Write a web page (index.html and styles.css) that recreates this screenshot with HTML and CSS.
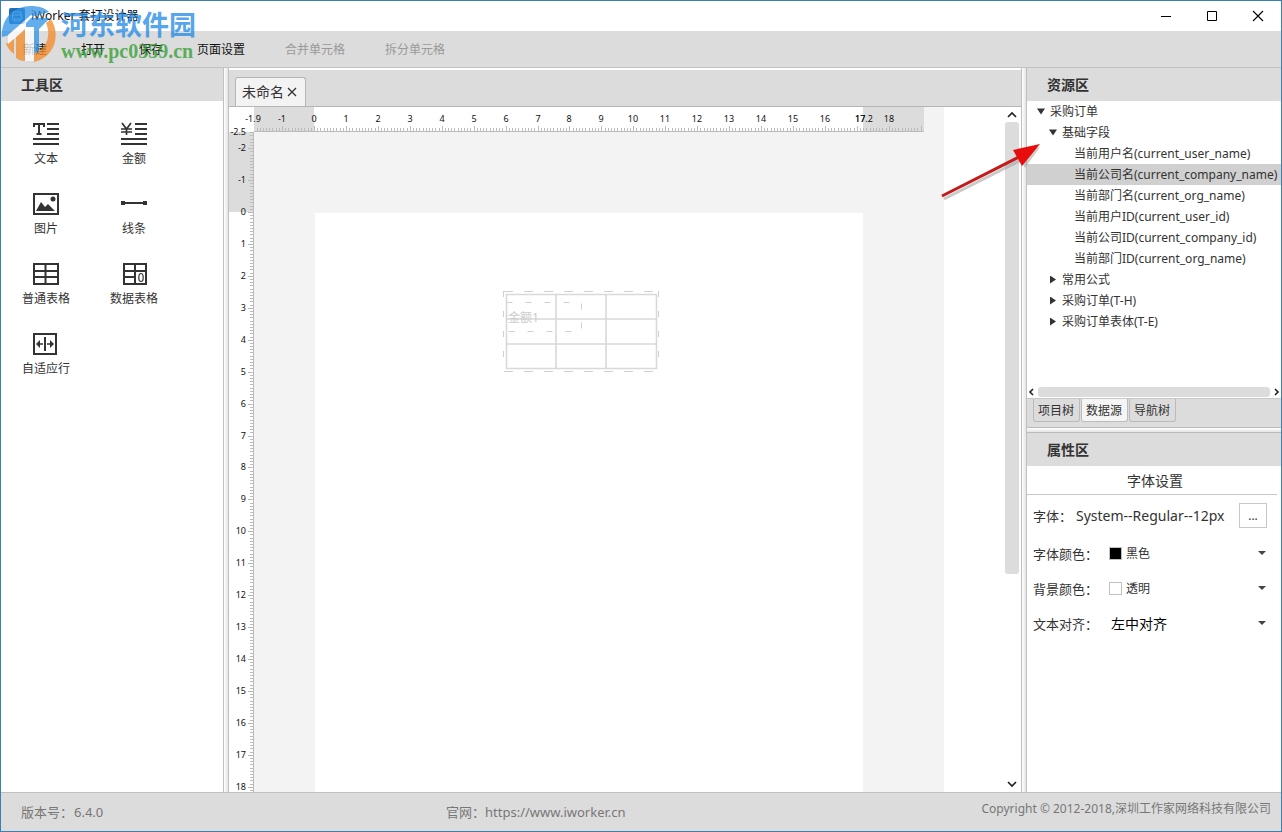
FILE: index.html
```html
<!DOCTYPE html>
<html lang="zh-CN">
<head>
<meta charset="utf-8">
<title>iWorker 套打设计器</title>
<link rel="stylesheet" href="styles.css">
</head>
<body>
<header class="titlebar">
  <svg class="app-icon" width="16" height="16" viewBox="0 0 16 16"><rect width="16" height="16" rx="2" fill="#1f6fb5"/><path d="M4 7V4h8v3M3.500 7h9v4h-9zM5 11v2h6v-2" fill="none" stroke="#b9dcf5"/></svg>
  <h1 class="app-title">iWorker 套打设计器</h1>
  <div class="window-buttons">
    <button class="window-button" aria-label="最小化"><svg width="12" height="12"><path d="M1 6.500h10" stroke="#000"/></svg></button>
    <button class="window-button" aria-label="最大化"><svg width="12" height="12"><path d="M1.500 1.500h9v9h-9z" fill="none" stroke="#000"/></svg></button>
    <button class="window-button" aria-label="关闭"><svg width="12" height="12"><path d="M1 1l10 10M11 1L1 11" stroke="#000" stroke-width="1.100"/></svg></button>
  </div>
</header>
<nav class="menu">
  <button class="menu-item">新建</button>
  <button class="menu-item">打开</button>
  <button class="menu-item">保存</button>
  <button class="menu-item">页面设置</button>
  <button class="menu-item menu-cell" disabled>合并单元格</button>
  <button class="menu-item menu-cell" disabled>拆分单元格</button>
</nav>

<main class="workspace">
  <section class="panel tools">
    <h2 class="panel-title">工具区</h2>
    <div class="tool-grid">
      <button class="tool"><svg width="26" height="24" viewBox="0 0 26 24"><path d="M14 2h12M14 7h12M14 12h12M0 17h26M0 22h26" stroke="#333" stroke-width="2"/><path d="M1 5V2h10v3M6 2v10M3.500 12h5" fill="none" stroke="#333" stroke-width="2"/></svg>文本</button>
      <button class="tool"><svg width="26" height="24" viewBox="0 0 26 24"><path d="M14 2h12M14 7h12M14 12h12M0 17h26M0 22h26" stroke="#333" stroke-width="2"/><path d="M1 1l4.500 6L10 1M5.500 7v6M0 7h11M0 10h11" fill="none" stroke="#333" stroke-width="1.700"/></svg>金额</button>
      <button class="tool"><svg width="26" height="24" viewBox="0 0 26 24"><path d="M1 2h24v20H1z" fill="none" stroke="#333" stroke-width="2"/><path d="M3 19l5-9 4 5 3-3 7 7z" fill="#333"/><circle cx="20" cy="7" r="2.500" fill="#333"/></svg>图片</button>
      <button class="tool"><svg width="26" height="24" viewBox="0 0 26 24"><path d="M2 11h22" stroke="#333" stroke-width="2"/><path d="M0 9h4v4H0zM22 9h4v4h-4z" fill="#333"/></svg>线条</button>
      <button class="tool"><svg width="26" height="24" viewBox="0 0 26 24"><path d="M1 2h24v20H1zM1 9h24M1 15h24M12.500 2v20" fill="none" stroke="#333" stroke-width="2"/></svg>普通表格</button>
      <button class="tool"><svg width="26" height="24" viewBox="0 0 26 24"><path d="M3 2h22v20H3zM3 9h22M3 15h11M14 2v20" fill="none" stroke="#333" stroke-width="2"/><ellipse cx="20" cy="15.500" rx="2.200" ry="4" fill="none" stroke="#333" stroke-width="1.200"/></svg>数据表格</button>
      <button class="tool"><svg width="26" height="24" viewBox="0 0 26 24"><path d="M1 2h22v20H1zM12 5v14" fill="none" stroke="#333" stroke-width="2"/><path d="M5 12h5M14 12h5" stroke="#333" stroke-width="1.500"/><path d="M3 12l4-4v8zM21 12l-4-4v8z" fill="#333"/></svg>自适应行</button>
    </div>
  </section>
  <div class="splitter"></div>

  <section class="editor">
    <div class="tabs">
      <div class="tab">未命名<button class="tab-close" aria-label="关闭标签"><svg width="10" height="10"><path d="M1 1l8 8M9 1L1 9" stroke="#333" stroke-width="1.300"/></svg></button></div>
    </div>
    <div class="editor-body">
      <div class="canvas">
        <svg class="ruler ruler-top" id="ruler-top"></svg>
        <svg class="ruler ruler-left" id="ruler-left"></svg>
        <div class="board">
          <div class="page">
            <svg class="design" width="158" height="84" viewBox="0 0 158 84">
              <path d="M3 3.500h151M3 28h151M3 53h151M3 77.500h151M3.500 3v75M53 3v75M103 3v75M153.500 3v75" stroke="#d9d9d9" stroke-width="1.600"/>
              <path d="M1 .5h155M1 80.500h155" stroke="#d0d0d0" stroke-dasharray="9 11"/>
              <path d="M.5 0v80M155.500 0v80" stroke="#d0d0d0" stroke-dasharray="6 14"/>
              <path d="M3.500 11.500H78.500V40.500H3.500z" fill="none" stroke="#d0d0d0" stroke-dasharray="6 13"/>
              <text x="5" y="31" class="design-text">金额1</text>
            </svg>
          </div>
        </div>
      </div>
      <div class="vscroll">
        <svg width="12" height="8"><path d="M2 7l4-4 4 4" fill="none" stroke="#222" stroke-width="1.700"/></svg>
        <div class="vtrack"><div class="vthumb"></div></div>
        <svg width="12" height="8"><path d="M2 1l4 4 4-4" fill="none" stroke="#222" stroke-width="1.700"/></svg>
      </div>
    </div>
  </section>
  <div class="splitter"></div>

  <div class="side">
    <section class="panel resources">
      <h2 class="panel-title">资源区</h2>
      <ul class="tree">
        <li class="node level-1 open">采购订单</li>
        <li class="node level-2 open">基础字段</li>
        <li class="node leaf">当前用户名(current_user_name)</li>
        <li class="node leaf selected">当前公司名(current_company_name)</li>
        <li class="node leaf">当前部门名(current_org_name)</li>
        <li class="node leaf">当前用户ID(current_user_id)</li>
        <li class="node leaf">当前公司ID(current_company_id)</li>
        <li class="node leaf">当前部门ID(current_org_name)</li>
        <li class="node level-2">常用公式</li>
        <li class="node level-2">采购订单(T-H)</li>
        <li class="node level-2">采购订单表体(T-E)</li>
      </ul>
      <div class="hscroll">
        <svg width="8" height="10"><path d="M6 2L3 5l3 3" fill="none" stroke="#222" stroke-width="1.600"/></svg>
        <div class="hthumb"></div>
        <svg width="8" height="10"><path d="M2 2l3 3-3 3" fill="none" stroke="#222" stroke-width="1.600"/></svg>
      </div>
      <div class="view-tabs">
        <button class="view-tab">项目树</button>
        <button class="view-tab active">数据源</button>
        <button class="view-tab">导航树</button>
      </div>
    </section>
    <div class="splitter-row"></div>
    <section class="panel properties">
      <h2 class="panel-title">属性区</h2>
      <h3 class="group-title">字体设置</h3>
      <div class="prop font-row">
        <span>字体：</span>
        <span class="font-value">System--Regular--12px</span>
        <button class="more" aria-label="选择字体">...</button>
      </div>
      <div class="prop">
        <label class="prop-label" for="fg">字体颜色：</label>
        <span class="swatch black"></span>
        <select class="choice" id="fg"><option>黑色</option></select>
        <svg class="caret" width="8" height="5"><path d="M0 0h8L4 4z" fill="#444"/></svg>
      </div>
      <div class="prop">
        <label class="prop-label" for="bg">背景颜色：</label>
        <span class="swatch"></span>
        <select class="choice" id="bg"><option>透明</option></select>
        <svg class="caret" width="8" height="5"><path d="M0 0h8L4 4z" fill="#444"/></svg>
      </div>
      <div class="prop">
        <label class="prop-label" for="align">文本对齐：</label>
        <select class="choice align" id="align"><option>左中对齐</option></select>
        <svg class="caret" width="8" height="5"><path d="M0 0h8L4 4z" fill="#444"/></svg>
      </div>
    </section>
  </div>
</main>

<footer class="status">
  <span class="version">版本号：<span class="version-number">6.4.0</span></span>
  <span class="site">官网：<a class="link" href="https://www.iworker.cn">https://www.iworker.cn</a></span>
  <span class="copyright">Copyright © 2012-2018,深圳工作家网络科技有限公司</span>
</footer>

<div class="watermark">
  <svg class="mark" width="58" height="62" viewBox="0 0 58 62">
    <path d="M1 36C0 16 14 5 30 5c8 0 14 2 18 6L34 15C24 18 16 25 13 33z" fill="#2f92e6"/>
    <path d="M25 17h24L38 28v22l-5 3V26h-8z" fill="#2f92e6"/>
    <path d="M50 18c10 16 4 38-17 43v-8c14-6 17-20 12-31z" fill="#f58a25"/>
    <path d="M5 43l8-6v16c-4-3-6-6-8-10zM15 36l9-8v32c-4 0-6-1-9-3z" fill="#f58a25"/>
    <path d="M7 34L30 14l2 1-10 10v5L7 43z" fill="#fff"/>
    <path d="M24 26h9v34h-9z" fill="#fff"/>
  </svg>
  <div class="mark-text"><span class="mark-name">河东软件园</span><span class="mark-url">www.pc0359.cn</span></div>
</div>
<svg class="pointer" width="108" height="66" viewBox="0 0 108 66">
  <path d="M5 60L82 21" stroke="#999" stroke-width="3" opacity=".5"/>
  <path d="M77 14L101 8 86 29z" fill="#999" opacity=".5"/>
  <path d="M3 57L80 18" stroke="#c41a1a" stroke-width="3"/>
  <path d="M74 11L101 5 83 27 79 20z" fill="#e80d0d"/>
</svg>
<script src="rulers.js"></script>
</body>
</html>
```
FILE: styles.css
```css
* { box-sizing: border-box; }
body {
  margin: 0;
  height: 100vh;
  display: flex;
  flex-direction: column;
  position: relative;
  overflow: hidden;
  border: 1px solid #3d7fb0;
  background: #fff;
  color: #333;
  font: 12px/18px "Noto Sans", "Noto Sans CJK SC", sans-serif;
}
button, select { font: inherit; color: inherit; background: none; border: 0; padding: 0; margin: 0; }
svg { display: block; flex: none; }
h1, h2, h3 { margin: 0; font-weight: 400; }

.titlebar { flex: none; height: 30px; display: flex; align-items: center; padding-left: 8px; }
.app-title { margin-left: 6px; font-size: 12px; color: #111; }
.window-buttons { margin-left: auto; display: flex; }
.window-button { width: 46px; height: 28px; display: flex; align-items: center; justify-content: center; }

.menu {
  flex: none;
  height: 37px;
  display: flex;
  align-items: center;
  gap: 34px;
  padding: 2px 0 0 22px;
  background: #dcdcdc;
  border-bottom: 1px solid #c2c2c2;
}
.menu-item { color: #111; white-space: nowrap; }
.menu-cell { margin-left: 6px; }
.menu-item:disabled { color: #999; }

.workspace { flex: 1; min-height: 0; display: flex; }
.splitter {
  flex: none;
  width: 6px;
  border: solid #c0c0c0;
  border-width: 0 1px;
  background: linear-gradient(to right, #fff, #e4e4e4);
}
.panel-title {
  flex: none;
  height: 33px;
  line-height: 33px;
  padding-left: 20px;
  background: #dcdcdc;
  font-size: 14px;
  font-weight: 700;
}

.tools { flex: none; width: 222px; }
.tool-grid { display: grid; grid-template-columns: 88px 88px; grid-auto-rows: 70px; padding: 21px 0 0 1px; }
.tool { display: flex; flex-direction: column; align-items: center; gap: 4px; white-space: nowrap; }

.editor { flex: 1; min-width: 0; display: flex; flex-direction: column; }
.tabs {
  flex: none;
  height: 39px;
  display: flex;
  align-items: flex-end;
  padding-left: 6px;
  border-top: 2px solid #fff;
  border-bottom: 1px solid #b5b5b5;
  background: #dcdcdc;
}
.tab {
  height: 29px;
  display: flex;
  align-items: center;
  gap: 3px;
  padding: 0 8px 0 6px;
  border: 1px solid #b5b5b5;
  border-bottom: 0;
  border-radius: 3px 3px 0 0;
  background: #f3f3f3;
  font-size: 14px;
}
.editor-body { flex: 1; min-height: 0; display: flex; }
.canvas {
  flex: 1;
  min-width: 0;
  display: grid;
  grid-template-columns: 25px 670px 20px;
  grid-template-rows: 25px minmax(0, 1fr);
  overflow: hidden;
}
.ruler { overflow: visible; font-size: 9px; z-index: 1; }
.ruler-top { grid-area: 1 / 2; width: 670px; height: 25px; }
.ruler-left { grid-area: 2 / 1; width: 25px; height: 100%; }
.ruler text { fill: #111; }
.ruler line { stroke: #bbb; }
.board { grid-area: 1 / 2 / 3 / 4; background: #f3f3f3; padding: 106px 81px 0 61px; }
.page { position: relative; height: 100%; background: #fff; }
.design { position: absolute; left: 188px; top: 78px; }
.design-text { font-size: 12px; fill: #ccc; }
.vscroll { flex: none; width: 16px; padding: 3px 0; margin-right: 1px; display: flex; flex-direction: column; align-items: center; gap: 4px; }
.vtrack { flex: 1; width: 14px; }
.vthumb { height: 69%; border-radius: 3px; background: #dcdcdc; }

.side { flex: none; width: 254px; display: flex; flex-direction: column; }
.resources { flex: none; display: flex; flex-direction: column; }
.tree { list-style: none; margin: 0; padding: 0; min-height: 285px; }
.node { height: 21px; line-height: 21px; display: flex; align-items: center; white-space: nowrap; }
.level-1 { padding-left: 10px; }
.level-2 { padding-left: 22px; }
.leaf { padding-left: 47px; }
.selected { background: #d0d0d0; }
.level-1::before, .level-2::before {
  content: "";
  width: 8px;
  height: 8px;
  margin-right: 5px;
  background: #333;
  clip-path: polygon(1px 0, 7px 4px, 1px 8px);
}
.open::before { clip-path: polygon(0 1px, 8px 1px, 4px 7px); }
.hscroll { height: 12px; display: flex; align-items: center; justify-content: space-between; gap: 3px; }
.hthumb { flex: 1; height: 10px; border-radius: 3px; background: #dcdcdc; }
.view-tabs { height: 29px; padding-left: 6px; display: flex; gap: 1px; align-items: flex-start; background: #dcdcdc; border-top: 1px solid #c8c8c8; }
.view-tab { height: 23px; padding: 1px 5px 0 4px; border: 1px solid #bbb; border-top: 0; border-radius: 0 0 3px 3px; white-space: nowrap; }
.view-tab.active { background: #f5f5f5; }
.splitter-row { flex: none; height: 6px; border: solid #bbb; border-width: 1px 0; background: linear-gradient(#fff, #e4e4e4); }
.properties { flex: 1; min-height: 0; }
.group-title { height: 29px; line-height: 29px; margin-right: 4px; padding-left: 6px; text-align: center; font-size: 14px; border-bottom: 1px solid #c8c8c8; }
.prop { height: 35px; display: flex; align-items: center; padding: 0 15px 0 6px; font-size: 13px; }
.font-row { height: 41px; }
.font-value { margin-left: 4px; white-space: nowrap; font-size: 14px; }
.more { width: 28px; height: 25px; margin-left: auto; margin-right: -1px; border: 1px solid #c8c8c8; line-height: 18px; font-size: 12px; }
.prop-label { width: 76px; white-space: nowrap; }
.swatch { width: 13px; height: 13px; margin-right: 4px; border: 1px solid #c0c0c0; }
.black { background: #000; }
.choice { flex: 1; min-width: 0; height: 25px; appearance: none; font-size: 12px; }
.align { padding-left: 2px; color: #000; font-size: 14px; }
.caret { pointer-events: none; }

.status {
  flex: none;
  height: 39px;
  display: flex;
  align-items: center;
  padding: 0 10px 0 20px;
  background: #dcdcdc;
  border-top: 1px solid #c0c0c0;
  color: #777;
  font-size: 13px;
  white-space: nowrap;
}
.version { flex: none; width: 34%; }
.version-number { margin-left: 1px; }
.site { flex: 1; }
.link { color: inherit; text-decoration: none; }
.copyright { padding-bottom: 6px; font-size: 12px; }

.watermark { position: absolute; left: 0; top: 0; display: flex; opacity: .75; pointer-events: none; }
.mark-text { display: flex; flex-direction: column; padding-top: 7px; margin-left: 2px; }
.mark-name { color: #1f88e5; font: 700 27px/32px "Noto Sans CJK SC", sans-serif; }
.mark-url { color: #2f9c2f; font: 700 20px/22px "Liberation Serif", serif; }
.pointer { position: absolute; left: 938px; top: 138px; pointer-events: none; }
```
FILE: rulers.js
```js
// Rulers are drawn in centimetres; the origin is the page's top left corner.
const CM = 31.93;
const NS = "http://www.w3.org/2000/svg";

function add(parent, tag, attrs, text) {
  const el = document.createElementNS(NS, tag);
  for (const key in attrs) el.setAttribute(key, attrs[key]);
  if (text !== undefined) el.textContent = text;
  parent.appendChild(el);
}

const topRuler = document.getElementById("ruler-top");
add(topRuler, "rect", { x: 0, y: 0, width: 670, height: 24, fill: "#dcdcdc" });
add(topRuler, "rect", { x: 60, y: 0, width: 549, height: 24, fill: "#fff" });
for (let i = -18; i <= 190; i++) {
  const x = Math.round(60 + i * CM / 10) + 0.5;
  add(topRuler, "line", { x1: x, x2: x, y1: i % 10 ? 21 : 19, y2: 24 });
}
add(topRuler, "line", { x1: 0, x2: 670, y1: 24.5, y2: 24.5 });
[-1.9, -1, ...Array(17).keys(), 18].forEach(n => {
  add(topRuler, "text", { x: Math.round(60 + n * CM), y: 15, "text-anchor": "middle" }, n);
});
// The page edge (17.2) shares its starting point with the 17 cm label.
[17, 17.2].forEach(n => add(topRuler, "text", { x: 601, y: 15 }, n));

const leftRuler = document.getElementById("ruler-left");
add(leftRuler, "rect", { x: 0, y: 0, width: 25, height: 80, fill: "#dcdcdc" });
for (let i = -25; i <= 190; i++) {
  const y = Math.round(80 + i * CM / 10) + 0.5;
  add(leftRuler, "line", { y1: y, y2: y, x1: i % 10 ? 21 : 19, x2: 25 });
}
add(leftRuler, "line", { x1: 24.5, x2: 24.5, y1: 0, y2: 2000 });
[-2.5, -2, -1, ...Array(19).keys()].forEach(n => {
  add(leftRuler, "text", { x: 17, y: Math.round(83 + n * CM), "text-anchor": "end" }, n);
});
```
